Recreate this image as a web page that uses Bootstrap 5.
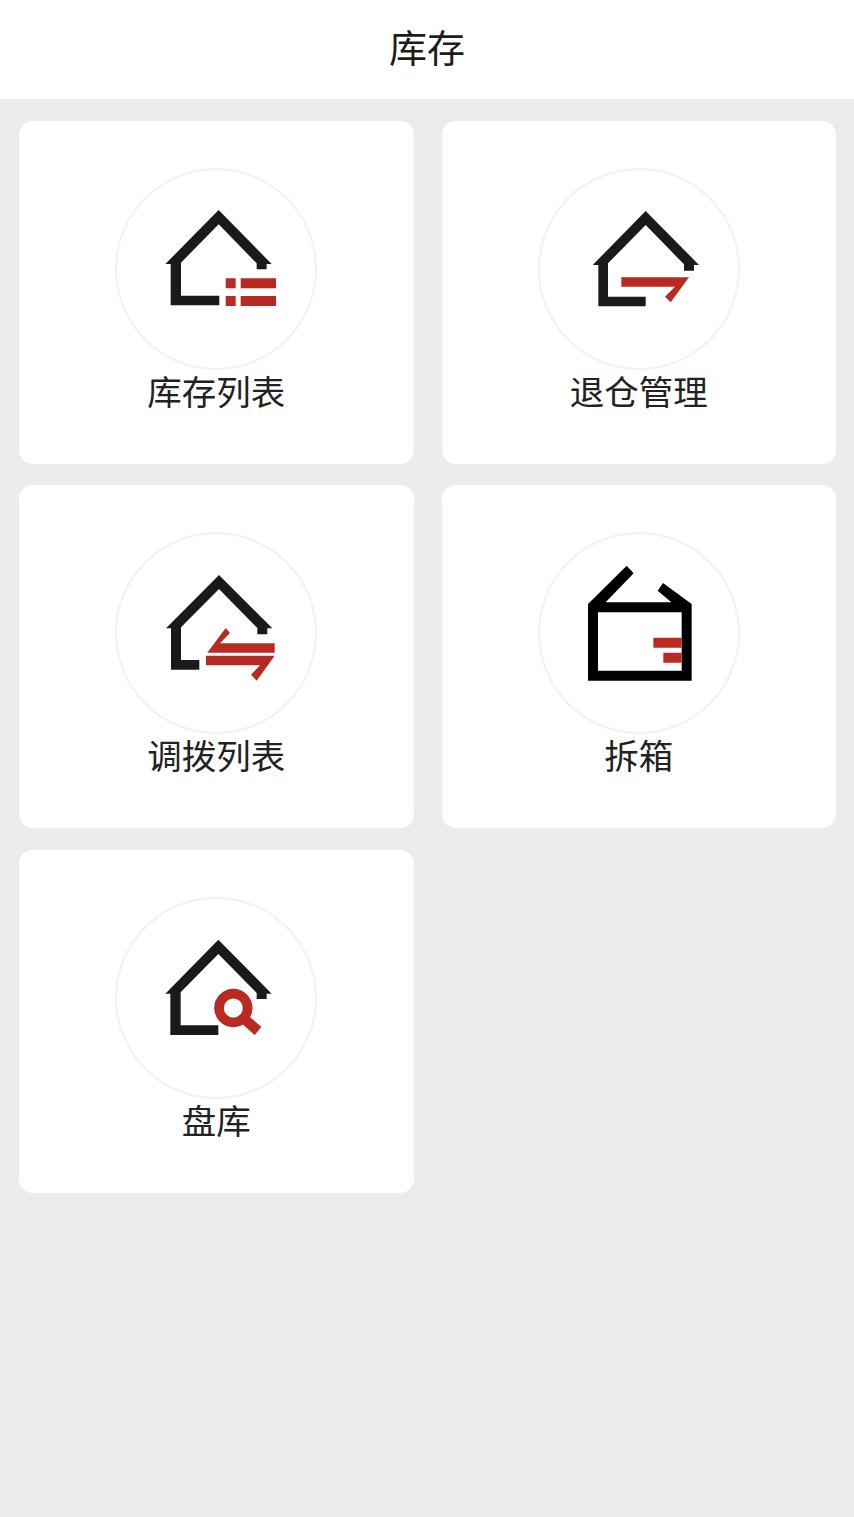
<!DOCTYPE html>
<html lang="zh-CN">
<head>
  <meta charset="UTF-8">
  <meta name="viewport" content="width=device-width, initial-scale=1.0">
  <title>库存</title>
  <link href="https://cdn.jsdelivr.net/npm/bootstrap@5.3.0/dist/css/bootstrap.min.css" rel="stylesheet">
  <style>
    body {
      background: #ececec;
      font-family: "Liberation Sans", "Noto Sans CJK SC", sans-serif;
      color: #222;
      min-height: 1517px;
    }
    .top-bar {
      height: 99px;
      font-size: 38px;
      color: #1c1c1c;
    }
    .stock-grid {
      display: grid;
      grid-template-columns: 394.5px 394.5px;
      column-gap: 28px;
      row-gap: 21.5px;
      padding: 21.5px 0 0 19px;
    }
    .stock-card {
      height: 343px;
      border: 0;
      border-radius: 14px;
      padding-top: 47px;
    }
    .icon-ring {
      width: 202px;
      height: 202px;
      border: 2px solid #f2f2f2;
      border-radius: 50%;
      overflow: hidden;
    }
    .icon-ring svg {
      display: block;
      margin: -2px;
    }
    .stock-label {
      font-size: 34.5px;
      line-height: 46px;
    }
    .ink { fill: #1a1a1a; }
    .ink-box { fill: #000; }
    .accent { fill: #b92a22; }
  </style>
</head>
<body>
  <div class="top-bar bg-white d-flex align-items-center justify-content-center">库存</div>

  <div class="stock-grid">
    <div class="card stock-card align-items-center">
      <div class="icon-ring">
        <svg width="202" height="202" viewBox="45 24 606 606">
          <path class="ink" d="M356 150L515 312H500V328H470V310L356 193L243 308V407H358V436H212V312H196Z"/>
          <path class="accent" d="M377 355H407V385H377ZM422 355H528V385H422ZM377 408H407V438H377ZM422 408H528V438H422Z"/>
        </svg>
      </div>
      <div class="stock-label">库存列表</div>
    </div>

    <div class="card stock-card align-items-center">
      <div class="icon-ring">
        <svg width="202" height="202" viewBox="27 24 606 606">
          <path class="ink" d="M350 153L510 315H495V332H465V313L350 195L237 310V410H350V439H208V315H191Z"/>
          <path class="accent" d="M277 352H480L425 427L408 410L438 380H277Z"/>
        </svg>
      </div>
      <div class="stock-label">退仓管理</div>
    </div>

    <div class="card stock-card align-items-center">
      <div class="icon-ring">
        <svg width="202" height="202" viewBox="45 24 606 606">
          <path class="ink" d="M357 153L517 313H502V331H472V312L357 195L243 310V408H298V437H213V313H198Z"/>
          <path class="accent" d="M377 312L390 327L360 358H524V386H322ZM318 395H524L470 470L453 452L480 424H318Z"/>
        </svg>
      </div>
      <div class="stock-label">调拨列表</div>
    </div>

    <div class="card stock-card align-items-center">
      <div class="icon-ring">
        <svg width="202" height="202" viewBox="27 24 606 606">
          <path class="ink-box" fill-rule="evenodd" d="M293 125L314 148L230 235H427L386 200L402 177L488 240V470H177V240ZM207 265V440H458V265Z"/>
          <path class="accent" d="M373 341H458V371H373ZM403 386H458V416H403Z"/>
        </svg>
      </div>
      <div class="stock-label">拆箱</div>
    </div>

    <div class="card stock-card align-items-center">
      <div class="icon-ring">
        <svg width="202" height="202" viewBox="45 22 606 606">
          <path class="ink" d="M355 150L515 312H500V328H470V310L355 193L242 308V407H355V436H211V312H196Z"/>
          <circle cx="400" cy="355" r="58" fill="#fff"/>
          <circle cx="400" cy="355" r="43" fill="none" stroke="#b92a22" stroke-width="29"/>
          <path d="M432 387L474 424" fill="none" stroke="#b92a22" stroke-width="31"/>
        </svg>
      </div>
      <div class="stock-label">盘库</div>
    </div>
  </div>

  <script src="https://cdn.jsdelivr.net/npm/bootstrap@5.3.0/dist/js/bootstrap.bundle.min.js"></script>
</body>
</html>
